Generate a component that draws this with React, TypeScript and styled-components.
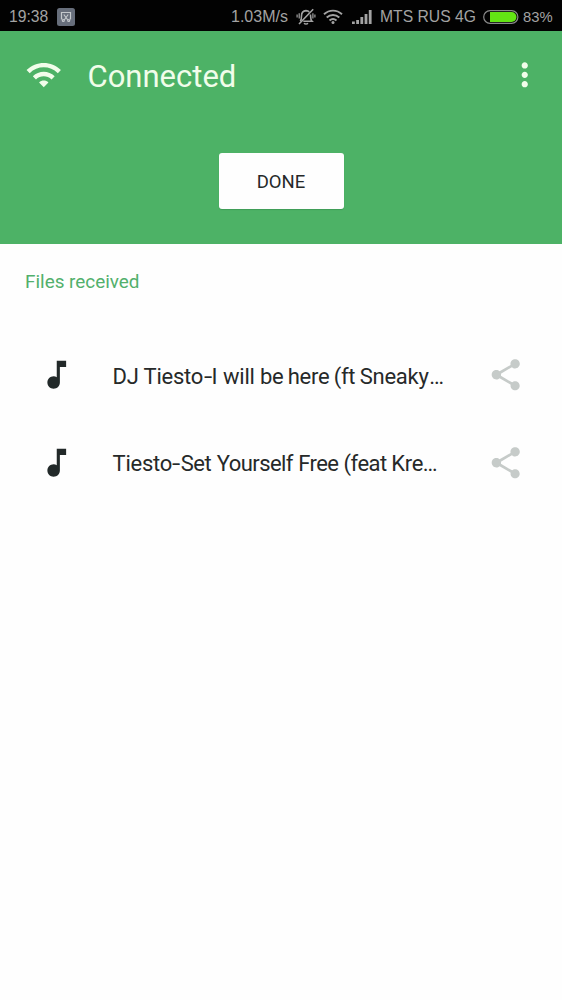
import React from "react";
import styled, { createGlobalStyle } from "styled-components";

const GlobalStyle = createGlobalStyle`
  * { box-sizing: border-box; }
  html, body { margin: 0; padding: 0; background: #fefefe; }
  body { font-family: Roboto, "Noto Sans", sans-serif; color: #262929; }
`;

const Screen = styled.div`
  width: 562px;
  height: 1000px;
  overflow: hidden;
  display: flex;
  flex-direction: column;
  background: #fefefe;
`;

const StatusBar = styled.div`
  height: 31px;
  flex: none;
  display: flex;
  align-items: center;
  padding: 2px 10px 0 9px;
  background: #020202;
  color: #a3a3a3;
  font-family: "Liberation Sans", sans-serif;
  line-height: 20px;
  white-space: nowrap;
`;

const StatusText = styled.span<{ $width: number; $gap?: number; $size?: number }>`
  width: ${(p) => p.$width}px;
  flex: none;
  margin-left: ${(p) => p.$gap ?? 0}px;
  font-size: ${(p) => p.$size ?? 16}px;
`;

const StatusGlyph = styled.svg<{ $gap: number }>`
  display: block;
  flex: none;
  margin-left: ${(p) => p.$gap}px;
`;

const Spacer = styled.div`
  flex: 1;
`;

const Header = styled.header`
  height: 213px;
  flex: none;
  display: flex;
  flex-direction: column;
  align-items: center;
  background: #4db266;
`;

const Toolbar = styled.div`
  width: 100%;
  height: 88px;
  flex: none;
  display: flex;
  align-items: center;
  padding: 0 19px 0 25px;
`;

const Title = styled.h1`
  flex: 1;
  margin: 3px 0 0 25px;
  font-size: 31px;
  font-weight: 400;
  line-height: 40px;
  color: #f1fdea;
`;

const Icon = styled.svg<{ $color: string }>`
  display: block;
  flex: none;
  width: 37.5px;
  height: 37.5px;
  fill: ${(p) => p.$color};
`;

const DoneButton = styled.button`
  width: 125px;
  height: 56px;
  margin-top: 34px;
  padding: 2px 0 0;
  border: 0;
  border-radius: 3px;
  background: #fefefe;
  box-shadow: 0 1px 1px rgba(0, 60, 20, 0.18);
  color: #262929;
  font: 400 18.5px/24px Roboto, sans-serif;
`;

const SectionTitle = styled.h2`
  margin: 26px 0 0 25px;
  font-size: 18.9px;
  font-weight: 400;
  line-height: 24px;
  color: #52b06c;
`;

const FileList = styled.ul`
  list-style: none;
  margin: 37px 0 0;
  padding: 0;
`;

const FileRow = styled.li`
  height: 87.5px;
  display: flex;
  align-items: center;
  padding: 0 37.7px 0 37.5px;
`;

const FileName = styled.span`
  flex: 1;
  display: flex;
  margin: 4px 0 0 37.5px;
  font-size: 22px;
  line-height: 30px;
  white-space: pre;
`;

const Word = styled.span<{ $width: number; $spacing?: number }>`
  width: ${(p) => p.$width}px;
  flex: none;
  letter-spacing: ${(p) => p.$spacing ?? -0.25}px;
`;

const Hyphen = styled(Word)`
  transform: scaleX(1.35);
  transform-origin: left;
`;

const NOTE = "M12 3v10.55c-.59-.34-1.27-.55-2-.55-2.21 0-4 1.79-4 4s1.79 4 4 4 4-1.79 4-4V7h4V3h-6z";
const SHARE =
  "M18 16.08c-.76 0-1.44.3-1.96.77L8.91 12.7c.05-.23.09-.46.09-.7s-.04-.47-.09-.7l7.05-4.11c.54.5 1.25.81 2.04.81 1.66 0 3-1.34 3-3s-1.34-3-3-3-3 1.34-3 3c0 .24.04.47.09.7L8.04 9.81C7.5 9.31 6.79 9 6 9c-1.66 0-3 1.34-3 3s1.34 3 3 3c.79 0 1.5-.31 2.04-.81l7.12 4.16c-.05.21-.08.43-.08.65 0 1.61 1.31 2.92 2.92 2.92s2.92-1.31 2.92-2.92-1.31-2.92-2.92-2.92z";
const WIFI =
  "M1 9l2 2c4.97-4.97 13.03-4.97 18 0l2-2C16.93 2.93 7.08 2.93 1 9zm8 8l3 3 3-3c-1.65-1.66-4.34-1.66-6 0zm-4-4l2 2c2.76-2.76 7.24-2.76 10 0l2-2C15.14 9.14 8.87 9.14 5 13z";
const MORE =
  "M12 8c1.1 0 2-.9 2-2s-.9-2-2-2-2 .9-2 2 .9 2 2 2zm0 2c-1.1 0-2 .9-2 2s.9 2 2 2 2-.9 2-2-.9-2-2-2zm0 6c-1.1 0-2 .9-2 2s.9 2 2 2 2-.9 2-2-.9-2-2-2z";

type Segment = [text: string, width: number, spacing?: number];

const files: Segment[][] = [
  [["DJ ", 31], ["Tiesto", 60], ["-", 8], ["I ", 11.5], ["will ", 37], ["be ", 27.7, -0.4], ["here ", 46], ["(ft ", 26], ["Sneaky", 69.5], ["…", 14]],
  [["Tiesto", 59.5], ["-", 8.7], ["Set ", 36, -0.4], ["Yourself ", 81.5, -0.55], ["Free ", 45.3, -0.55], ["(feat ", 47.7, -0.5], ["Kre", 31.5, -0.3], ["…", 14, -0.5]],
];

function ScreenshotGlyph() {
  return (
    <StatusGlyph $gap={0} width="18" height="18" viewBox="0 0 18 18">
      <rect width="18" height="18" rx="2.5" fill="#676e7b" />
      <g fill="none" stroke="#c4c8cc" strokeWidth="1.2">
        <path d="M5.500 11H4.500V4.500h9V11h-1" />
        <path d="M6.800 6.500l4 5.500M11.200 6.500l-4 5.500" />
        <circle cx="6.300" cy="12.500" r="1" />
        <circle cx="11.700" cy="12.500" r="1" />
      </g>
    </StatusGlyph>
  );
}

function MutedBell() {
  return (
    <StatusGlyph $gap={0} width="20" height="18" viewBox="0 0 20 18" fill="none" stroke="#a3a3a3" strokeWidth="1.6">
      <path d="M4.2 13.2c1.3-1.2 1.3-3 1.3-5.2C5.5 5 7 2.8 10 2.6c1.4 0 2.5.5 3.2 1.3M14.5 6.500c.2 3 0 5.400 1.400 6.700H7.300" />
      <path d="M8.200 15c.6 1.400 3 1.400 3.600 0M17.200 1.300L3 16" />
      <path d="M3.200 5.200v5.400M1.100 6.400v3M16.900 5.200v5.400M18.900 6.400v3" strokeWidth="1.2" />
    </StatusGlyph>
  );
}

function StatusWifi() {
  return (
    <StatusGlyph $gap={7} width="20" height="16" viewBox="0 0 20 16" fill="none" stroke="#a3a3a3" strokeWidth="1.9">
      <path d="M1 5.3c5.2-4.9 12.8-4.9 18 0M3.7 8.5c3.7-3.4 8.9-3.4 12.6 0M6.5 11.5c2.1-1.9 4.9-1.9 7 0" />
      <circle cx="10" cy="13.6" r="1.5" fill="#a3a3a3" stroke="none" />
    </StatusGlyph>
  );
}

function Signal() {
  return (
    <StatusGlyph $gap={9} width="20" height="14" viewBox="0 0 20 14" fill="#a3a3a3">
      <rect x="0" y="11.5" width="2.8" height="2.5" />
      <rect x="4.2" y="10" width="2.8" height="4" />
      <rect x="8.4" y="7" width="2.8" height="7" />
      <rect x="12.6" y="4" width="2.8" height="10" />
      <rect x="16.8" y="0" width="2.8" height="14" />
    </StatusGlyph>
  );
}

function Battery() {
  return (
    <StatusGlyph $gap={0} width="36" height="14" viewBox="0 0 36 14">
      <rect x="0.7" y="0.7" width="34.2" height="12.6" rx="6.3" fill="none" stroke="#8a8a8a" strokeWidth="1.2" />
      <path d="M7 2h21.5a5 5 0 0 1 0 10H7z" fill="#63e414" />
    </StatusGlyph>
  );
}

export default function App() {
  return (
    <>
      <GlobalStyle />
      <Screen>
        <StatusBar>
          <StatusText $width={48} $size={15.7}>19:38</StatusText>
          <ScreenshotGlyph />
          <Spacer />
          <StatusText $width={65}>1.03M/s</StatusText>
          <MutedBell />
          <StatusWifi />
          <Signal />
          <StatusText $width={103} $gap={8} $size={15.7}>MTS RUS 4G</StatusText>
          <Battery />
          <StatusText $width={29} $gap={4} $size={14.8}>83%</StatusText>
        </StatusBar>
        <Header>
          <Toolbar>
            <Icon $color="#f1fdea" viewBox="0 0 24 24"><path d={WIFI} /></Icon>
            <Title>Connected</Title>
            <Icon $color="#f1fdea" viewBox="0 0 24 24"><path d={MORE} /></Icon>
          </Toolbar>
          <DoneButton>DONE</DoneButton>
        </Header>
        <SectionTitle>Files received</SectionTitle>
        <FileList>
          {files.map((segments, row) => (
            <FileRow key={row}>
              <Icon $color="#222929" viewBox="0 0 24 24"><path d={NOTE} /></Icon>
              <FileName>
                {segments.map(([text, width, spacing], i) =>
                  text === "-" ? (
                    <Hyphen key={i} $width={width}>{text}</Hyphen>
                  ) : (
                    <Word key={i} $width={width} $spacing={spacing}>{text}</Word>
                  ),
                )}
              </FileName>
              <Icon $color="#c6cbc9" viewBox="0 0 24 24"><path d={SHARE} /></Icon>
            </FileRow>
          ))}
        </FileList>
      </Screen>
    </>
  );
}
